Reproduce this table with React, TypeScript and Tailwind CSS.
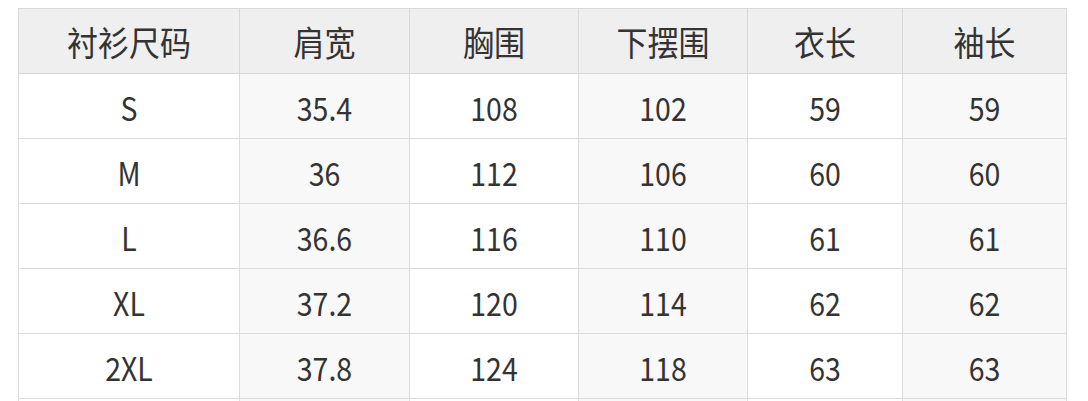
import React from "react";

const headers = ["衬衫尺码", "肩宽", "胸围", "下摆围", "衣长", "袖长"];
const rows = [
  ["S", "35.4", "108", "102", "59", "59"],
  ["M", "36", "112", "106", "60", "60"],
  ["L", "36.6", "116", "110", "61", "61"],
  ["XL", "37.2", "120", "114", "62", "62"],
  ["2XL", "37.8", "124", "118", "63", "63"],
  ["", "", "", "", "", ""],
];
const widths = ["w-[221px]", "w-[170px]", "w-[169px]", "w-[169px]", "w-[155px]", "w-[164px]"];

export default function App() {
  return (
    <div className="w-[1088px] h-[401px] overflow-hidden bg-white pt-[8px] pl-[18px]" style={{ fontFamily: '"Noto Sans CJK SC", "Noto Sans", sans-serif' }}>
      <table className="border-collapse text-[#333333]">
        <thead>
          <tr className="bg-[#efefef]">
            {headers.map((h, i) => (
              <th key={i} className={`${widths[i]} h-[65px] border border-[#d8d8d8] p-0 text-center font-normal text-[31px]`}>
                <span className="inline-block scale-y-[1.1] translate-y-[1px]">{h}</span>
              </th>
            ))}
          </tr>
        </thead>
        <tbody>
          {rows.map((r, ri) => (
            <tr key={ri}>
              {r.map((c, ci) => (
                <td
                  key={ci}
                  className={`h-[65px] border border-[#dcdcdc] p-0 text-center text-[28.5px] ${ci % 2 === 1 ? "bg-[#f8f8f8]" : "bg-white"}`}
                >
                  <span className="inline-block scale-y-[1.13] translate-y-[1px]">{c}</span>
                </td>
              ))}
            </tr>
          ))}
        </tbody>
      </table>
    </div>
  );
}
